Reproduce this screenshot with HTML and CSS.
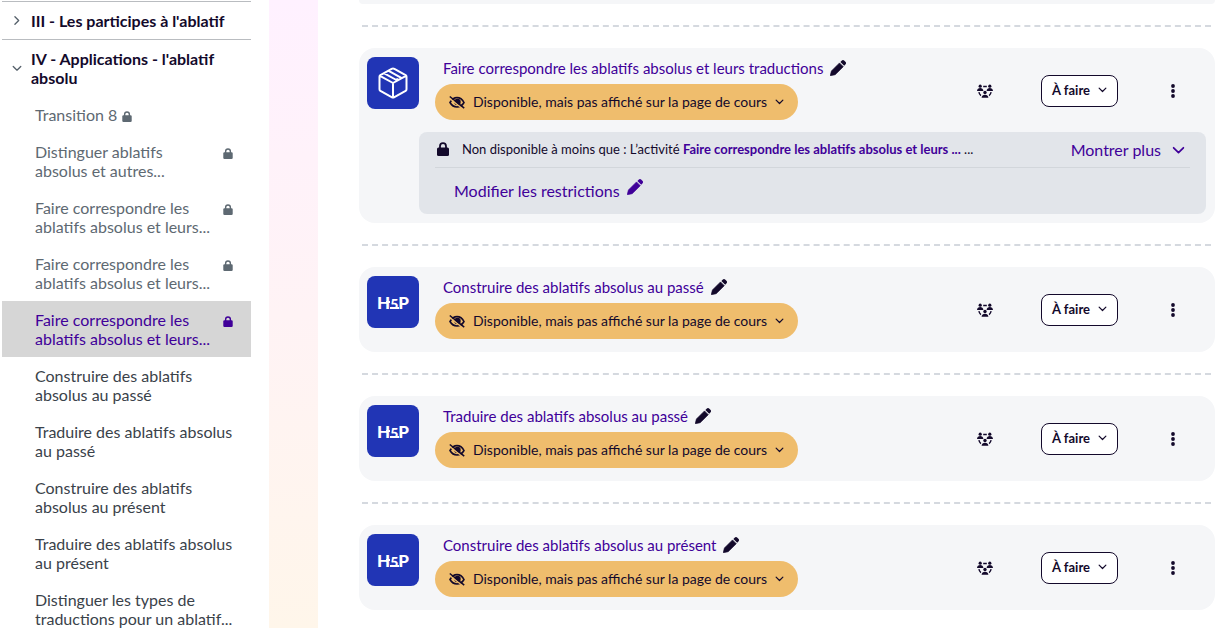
FILE: index.html
```html
<!DOCTYPE html>
<html lang="fr">
<head>
    <meta charset="UTF-8">
    <meta name="viewport" content="width=device-width, initial-scale=1.0">
    <title>Applications - l'ablatif absolu</title>
    <link rel="stylesheet" href="styles.css">
</head>
<body>
    <!-- shared icons -->
    <svg class="sprite" aria-hidden="true">
        <symbol id="lock" viewBox="0 0 12 14">
            <path d="M3 7V4.200a3 3 0 0 1 6 0V7" fill="none" stroke="currentColor" stroke-width="1.800"/>
            <rect x="0" y="5.500" width="12" height="8.500" rx="1.500" fill="currentColor"/>
        </symbol>
        <symbol id="down" viewBox="0 0 12 8">
            <path d="M1.500 1.500L6 6l4.500-4.500" fill="none" stroke="currentColor" stroke-width="1.600" stroke-linecap="round" stroke-linejoin="round"/>
        </symbol>
        <symbol id="pen" viewBox="0 0 16 16">
            <path d="M.2 15.800L1.400 11 9.500 2.900l3.800 3.800-8.100 8z" fill="currentColor" stroke="currentColor" stroke-width=".6" stroke-linejoin="round"/>
            <path d="M10.400 2l1.200-1.300a2 2 0 0 1 2.800 0l1 1a2 2 0 0 1 0 2.800l-1.200 1.300z" fill="currentColor"/>
        </symbol>
        <symbol id="hidden" viewBox="0 0 16 14">
            <path d="M1 7.500C3 4 5.500 2.600 8 2.600s5.200 1.400 7 4.900c-1.800 3.200-4.400 4.500-7 4.500s-5.200-1.300-7-4.500z" fill="none" stroke="currentColor" stroke-width="1.600"/>
            <circle cx="8.500" cy="7" r="3.200" fill="currentColor"/>
            <path d="M1 3.600l12 9.700" stroke="#efbd6d" stroke-width="1.400"/>
            <path d="M.8 1.500l14.400 11.700" stroke="currentColor" stroke-width="1.500"/>
        </symbol>
        <symbol id="group" viewBox="0 0 16 14">
            <g fill="currentColor">
                <circle cx="3.200" cy="2.200" r="1.600"/>
                <circle cx="12.800" cy="2.200" r="1.600"/>
                <circle cx="8" cy="8.500" r="1.700"/>
                <path d="M0 7c0-4 6.400-4 6.400 0zM9.600 7c0-4 6.400-4 6.400 0zM4.600 13.700c0-4 6.800-4 6.800 0z"/>
            </g>
            <path d="M6.200 2.500h3.600M1.900 8.200c.3 1.500 1 2.600 2 3.400M14.100 8.200c-.3 1.500-1 2.600-2 3.400" fill="none" stroke="currentColor" stroke-width="1.400"/>
        </symbol>
        <symbol id="dots" viewBox="0 0 4 14">
            <g fill="currentColor">
                <circle cx="2" cy="2" r="1.900"/>
                <circle cx="2" cy="7" r="1.900"/>
                <circle cx="2" cy="12" r="1.900"/>
            </g>
        </symbol>
        <symbol id="package" viewBox="0 0 30 32">
            <path d="M13.600 1.900L2.400 8.100Q1.500 8.700 1.500 9.700v12.600q0 1 .9 1.600l11.200 6.200q1.400.8 2.800 0l11.200-6.200q.9-.6.900-1.600V9.700q0-1-.9-1.600L16.400 1.900q-1.400-.8-2.800 0zM2 8.800l13 7.200 13-7.200M15 16v14.500M6.300 6.300l13 7.200v-2.300M10.700 3.900l13 7.200" fill="none" stroke="#fff" stroke-width="2" stroke-linejoin="round"/>
        </symbol>
    </svg>

    <div class="page">
        <nav class="sidebar" aria-label="Index du cours">
            <div class="section-title">
                <svg class="chevron closed"><use href="#down"/></svg>
                <a href="#">III - Les participes à l'ablatif</a>
            </div>
            <div class="section-title">
                <svg class="chevron"><use href="#down"/></svg>
                <a href="#">IV - Applications - l'ablatif absolu</a>
            </div>
            <ul class="index">
                <li class="locked short"><a href="#">Transition 8</a><svg class="lock"><use href="#lock"/></svg></li>
                <li class="locked"><a href="#">Distinguer ablatifs absolus et autres...</a><svg class="lock"><use href="#lock"/></svg></li>
                <li class="locked"><a href="#">Faire correspondre les ablatifs absolus et leurs...</a><svg class="lock"><use href="#lock"/></svg></li>
                <li class="locked"><a href="#">Faire correspondre les ablatifs absolus et leurs...</a><svg class="lock"><use href="#lock"/></svg></li>
                <li class="locked active"><a href="#">Faire correspondre les ablatifs absolus et leurs...</a><svg class="lock"><use href="#lock"/></svg></li>
                <li><a href="#">Construire des ablatifs absolus au passé</a></li>
                <li><a href="#">Traduire des ablatifs absolus au passé</a></li>
                <li><a href="#">Construire des ablatifs absolus au présent</a></li>
                <li><a href="#">Traduire des ablatifs absolus au présent</a></li>
                <li><a href="#">Distinguer les types de traductions pour un ablatif...</a></li>
            </ul>
        </nav>

        <main class="content">
            <div class="card-end"></div>
            <hr class="divider">

            <section class="card">
                <div class="activity">
                    <div class="activity-icon"><svg class="package"><use href="#package"/></svg></div>
                    <div class="info">
                        <div class="name"><a href="#">Faire correspondre les ablatifs absolus et leurs traductions</a><button class="icon-btn" aria-label="Modifier le titre"><svg class="pen"><use href="#pen"/></svg></button></div>
                        <button class="visibility"><svg class="hidden-icon"><use href="#hidden"/></svg>Disponible, mais pas affiché sur la page de cours<svg class="down"><use href="#down"/></svg></button>
                    </div>
                    <div class="actions">
                        <button class="icon-btn group-btn" aria-label="Mode de groupe"><svg class="group"><use href="#group"/></svg></button>
                        <button class="todo">À faire<svg class="down"><use href="#down"/></svg></button>
                        <button class="icon-btn menu-btn" aria-label="Actions"><svg class="dots"><use href="#dots"/></svg></button>
                    </div>
                </div>
                <div class="restriction">
                    <div class="condition">
                        <svg class="lock-big"><use href="#lock"/></svg>
                        <p>Non disponible à moins que : L’activité <a href="#">Faire correspondre les ablatifs absolus et leurs ...</a> ...</p>
                        <button class="more">Montrer plus<svg class="down-big"><use href="#down"/></svg></button>
                    </div>
                    <a class="edit" href="#">Modifier les restrictions<svg class="pen"><use href="#pen"/></svg></a>
                </div>
            </section>
            <hr class="divider">

            <section class="card">
                <div class="activity">
                    <div class="activity-icon">
                        <svg class="h5p" viewBox="0 0 36 24"><text x="18" y="19" text-anchor="middle">H<tspan class="five">5</tspan>P</text><path d="M11 11h4v2h-4zM15 17h9v2h-9z"/></svg>
                    </div>
                    <div class="info">
                        <div class="name"><a href="#">Construire des ablatifs absolus au passé</a><button class="icon-btn" aria-label="Modifier le titre"><svg class="pen"><use href="#pen"/></svg></button></div>
                        <button class="visibility"><svg class="hidden-icon"><use href="#hidden"/></svg>Disponible, mais pas affiché sur la page de cours<svg class="down"><use href="#down"/></svg></button>
                    </div>
                    <div class="actions">
                        <button class="icon-btn group-btn" aria-label="Mode de groupe"><svg class="group"><use href="#group"/></svg></button>
                        <button class="todo">À faire<svg class="down"><use href="#down"/></svg></button>
                        <button class="icon-btn menu-btn" aria-label="Actions"><svg class="dots"><use href="#dots"/></svg></button>
                    </div>
                </div>
            </section>
            <hr class="divider">

            <section class="card">
                <div class="activity">
                    <div class="activity-icon">
                        <svg class="h5p" viewBox="0 0 36 24"><text x="18" y="19" text-anchor="middle">H<tspan class="five">5</tspan>P</text><path d="M11 11h4v2h-4zM15 17h9v2h-9z"/></svg>
                    </div>
                    <div class="info">
                        <div class="name"><a href="#">Traduire des ablatifs absolus au passé</a><button class="icon-btn" aria-label="Modifier le titre"><svg class="pen"><use href="#pen"/></svg></button></div>
                        <button class="visibility"><svg class="hidden-icon"><use href="#hidden"/></svg>Disponible, mais pas affiché sur la page de cours<svg class="down"><use href="#down"/></svg></button>
                    </div>
                    <div class="actions">
                        <button class="icon-btn group-btn" aria-label="Mode de groupe"><svg class="group"><use href="#group"/></svg></button>
                        <button class="todo">À faire<svg class="down"><use href="#down"/></svg></button>
                        <button class="icon-btn menu-btn" aria-label="Actions"><svg class="dots"><use href="#dots"/></svg></button>
                    </div>
                </div>
            </section>
            <hr class="divider">

            <section class="card">
                <div class="activity">
                    <div class="activity-icon">
                        <svg class="h5p" viewBox="0 0 36 24"><text x="18" y="19" text-anchor="middle">H<tspan class="five">5</tspan>P</text><path d="M11 11h4v2h-4zM15 17h9v2h-9z"/></svg>
                    </div>
                    <div class="info">
                        <div class="name"><a href="#">Construire des ablatifs absolus au présent</a><button class="icon-btn" aria-label="Modifier le titre"><svg class="pen"><use href="#pen"/></svg></button></div>
                        <button class="visibility"><svg class="hidden-icon"><use href="#hidden"/></svg>Disponible, mais pas affiché sur la page de cours<svg class="down"><use href="#down"/></svg></button>
                    </div>
                    <div class="actions">
                        <button class="icon-btn group-btn" aria-label="Mode de groupe"><svg class="group"><use href="#group"/></svg></button>
                        <button class="todo">À faire<svg class="down"><use href="#down"/></svg></button>
                        <button class="icon-btn menu-btn" aria-label="Actions"><svg class="dots"><use href="#dots"/></svg></button>
                    </div>
                </div>
            </section>
        </main>
    </div>
</body>
</html>
```
FILE: styles.css
```css
* {
    box-sizing: border-box;
}

body {
    margin: 0;
    font-family: Lato, sans-serif;
    font-size: 15px;
    color: #13092b;
    background: #fff;
}

a {
    color: inherit;
    text-decoration: none;
}

button {
    font-family: inherit;
    color: inherit;
    cursor: pointer;
}

svg {
    flex: none;
}

.sprite {
    position: absolute;
    width: 0;
    height: 0;
}

.page {
    display: flex;
    height: 100vh;
    overflow: hidden;
    background: linear-gradient(#fff1ff, #fff3f5 50%, #fff6ea);
}

/* course index */
.sidebar {
    flex: none;
    width: 269px;
    padding: 1px 18px 0 2px;
    background: #fff;
}

.section-title {
    display: flex;
    align-items: center;
    gap: 9px;
    padding: 9px 24px 9px 10px;
    border-top: 1px solid #b9bcc0;
    font-size: 16px;
    line-height: 19px;
    font-weight: bold;
}

.chevron {
    width: 10px;
    height: 7px;
    color: #56616b;
}

.chevron.closed {
    transform: rotate(-90deg);
}

.index {
    margin: 0;
    padding: 0;
    list-style: none;
    font-size: 16px;
}

.index li {
    display: flex;
    padding: 9px 18px 9px 33px;
    line-height: 19px;
    color: #3a424a;
}

.index .locked {
    justify-content: space-between;
    gap: 10px;
    color: #5e6972;
}

.index .short {
    justify-content: flex-start;
    gap: 5px;
}

.index .active {
    background: #d6d6d6;
    color: #400099;
}

.lock {
    width: 10px;
    height: 11px;
    margin-top: 6px;
}

/* activities */
.content {
    flex: 1;
    min-width: 0;
    margin-left: 49px;
    padding: 0 4px 0 41px;
    background: #fff;
}

.card-end {
    height: 4px;
    border-radius: 0 0 16px 16px;
    background: #f5f6f8;
}

.divider {
    margin: 21px 4px 21px 3px;
    border: 0;
    border-top: 2px dashed #d5d9df;
}

.card {
    padding: 9px 9px 9px 8px;
    border-radius: 16px;
    background: #f5f6f8;
}

.activity {
    display: flex;
    align-items: center;
    justify-content: space-between;
}

.activity-icon {
    display: flex;
    align-items: center;
    justify-content: center;
    align-self: flex-start;
    width: 52px;
    height: 52px;
    margin-right: 16px;
    border-radius: 8px;
    background: #2135b5;
}

.package {
    width: 30px;
    height: 32px;
}

.h5p {
    width: 36px;
    height: 24px;
    font-size: 17px;
    font-weight: 900;
    fill: #fff;
}

.h5p .five {
    font-size: 14px;
}

.info {
    flex: 1;
    padding-bottom: 4px;
}

.name {
    display: flex;
    align-items: center;
    gap: 7px;
    height: 22px;
    margin-bottom: 5px;
    padding-left: 8px;
    color: #400099;
}

.icon-btn {
    display: flex;
    align-items: center;
    justify-content: center;
    padding: 0;
    border: 0;
    background: none;
    color: #13092b;
}

.pen {
    width: 16px;
    height: 16px;
}

.visibility {
    display: flex;
    align-items: center;
    gap: 8px;
    height: 36px;
    padding: 0 14px 1px;
    border: 0;
    border-radius: 18px;
    background: #efbd6d;
    font-size: 14px;
}

.hidden-icon {
    width: 16px;
    height: 14px;
}

.down {
    width: 9px;
    height: 6px;
}

.actions {
    display: flex;
    align-items: center;
    padding-right: 17px;
}

.group-btn {
    margin-right: 48px;
}

.group {
    width: 16px;
    height: 14px;
}

.todo {
    display: flex;
    align-items: center;
    gap: 8px;
    height: 32px;
    padding: 0 10px 2px;
    border: 1px solid #13092b;
    border-radius: 8px;
    background: #fff;
    font-size: 13px;
    font-weight: bold;
}

.menu-btn {
    width: 32px;
    height: 32px;
    margin-left: 39px;
}

.dots {
    width: 4px;
    height: 14px;
}

.restriction {
    margin: 8px 0 0 52px;
    padding: 0 16px;
    border-radius: 8px;
    background: #e2e5ea;
}

.condition {
    display: flex;
    align-items: center;
    height: 36px;
    padding: 0 5px 1px 2px;
    border-bottom: 1px solid #d2d6db;
}

.condition p {
    flex: 1;
    margin: 0 0 0 13px;
    font-size: 13px;
}

.condition p a {
    color: #400099;
    font-weight: bold;
}

.lock-big {
    width: 12px;
    height: 14px;
}

.more {
    display: flex;
    align-items: center;
    gap: 11px;
    padding: 0;
    border: 0;
    background: none;
    color: #400099;
    font-size: 16px;
}

.down-big {
    width: 13px;
    height: 9px;
    margin-top: 3px;
}

.edit {
    display: flex;
    align-items: center;
    gap: 7px;
    height: 46px;
    padding: 0 0 2px 19px;
    color: #400099;
    font-size: 16px;
}

.edit .pen {
    margin-bottom: 7px;
}
```
